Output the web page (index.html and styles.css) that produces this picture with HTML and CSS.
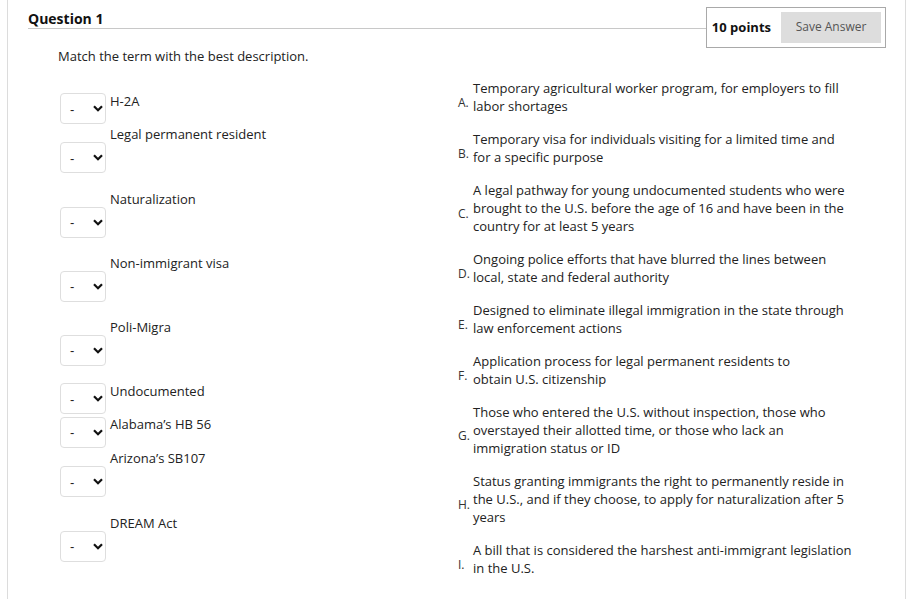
FILE: index.html
```html
<!DOCTYPE html>
<html>
<head>
<meta charset="utf-8">
<link rel="stylesheet" href="styles.css">
</head>
<body>
<div class="page">
  <div class="qhead">
    <div class="qtitle">Question 1</div>
    <div class="pointsbox">
      <span class="points">10 points</span>
      <span class="savebtn">Save Answer</span>
    </div>
  </div>
  <div class="qbody">
    <p class="instr">Match the term with the best description.</p>
    <div class="match">
      <div class="terms">
        <div class="trow h33"><div class="sel"><span class="dash">-</span><svg class="chev" width="10" height="7" viewBox="0 0 10 7"><path d="M1 1.2 L5 5.2 L9 1.2" fill="none" stroke="#111" stroke-width="2.2"/></svg></div><div class="term">H-2A</div></div>
        <div class="trow h65"><div class="sel"><span class="dash">-</span><svg class="chev" width="10" height="7" viewBox="0 0 10 7"><path d="M1 1.2 L5 5.2 L9 1.2" fill="none" stroke="#111" stroke-width="2.2"/></svg></div><div class="term">Legal permanent resident</div></div>
        <div class="trow h64"><div class="sel"><span class="dash">-</span><svg class="chev" width="10" height="7" viewBox="0 0 10 7"><path d="M1 1.2 L5 5.2 L9 1.2" fill="none" stroke="#111" stroke-width="2.2"/></svg></div><div class="term">Naturalization</div></div>
        <div class="trow h64"><div class="sel"><span class="dash">-</span><svg class="chev" width="10" height="7" viewBox="0 0 10 7"><path d="M1 1.2 L5 5.2 L9 1.2" fill="none" stroke="#111" stroke-width="2.2"/></svg></div><div class="term">Non-immigrant visa</div></div>
        <div class="trow h64"><div class="sel"><span class="dash">-</span><svg class="chev" width="10" height="7" viewBox="0 0 10 7"><path d="M1 1.2 L5 5.2 L9 1.2" fill="none" stroke="#111" stroke-width="2.2"/></svg></div><div class="term">Poli-Migra</div></div>
        <div class="trow h33"><div class="sel"><span class="dash">-</span><svg class="chev" width="10" height="7" viewBox="0 0 10 7"><path d="M1 1.2 L5 5.2 L9 1.2" fill="none" stroke="#111" stroke-width="2.2"/></svg></div><div class="term">Undocumented</div></div>
        <div class="trow h34"><div class="sel"><span class="dash">-</span><svg class="chev" width="10" height="7" viewBox="0 0 10 7"><path d="M1 1.2 L5 5.2 L9 1.2" fill="none" stroke="#111" stroke-width="2.2"/></svg></div><div class="term">Alabama’s HB 56</div></div>
        <div class="trow h65"><div class="sel"><span class="dash">-</span><svg class="chev" width="10" height="7" viewBox="0 0 10 7"><path d="M1 1.2 L5 5.2 L9 1.2" fill="none" stroke="#111" stroke-width="2.2"/></svg></div><div class="term">Arizona’s SB107</div></div>
        <div class="trow h64"><div class="sel"><span class="dash">-</span><svg class="chev" width="10" height="7" viewBox="0 0 10 7"><path d="M1 1.2 L5 5.2 L9 1.2" fill="none" stroke="#111" stroke-width="2.2"/></svg></div><div class="term">DREAM Act</div></div>
      </div>
      <div class="descs">
        <div class="drow"><div class="letter">A.</div><div class="desc">Temporary agricultural worker program, for employers to fill labor shortages</div></div>
        <div class="drow"><div class="letter">B.</div><div class="desc">Temporary visa for individuals visiting for a limited time and for a specific purpose</div></div>
        <div class="drow"><div class="letter">C.</div><div class="desc">A legal pathway for young undocumented students who were brought to the U.S. before the age of 16 and have been in the country for at least 5 years</div></div>
        <div class="drow"><div class="letter">D.</div><div class="desc">Ongoing police efforts that have blurred the lines between local, state and federal authority</div></div>
        <div class="drow"><div class="letter">E.</div><div class="desc">Designed to eliminate illegal immigration in the state through law enforcement actions</div></div>
        <div class="drow"><div class="letter">F.</div><div class="desc">Application process for legal permanent residents to<br>obtain U.S. citizenship</div></div>
        <div class="drow"><div class="letter">G.</div><div class="desc">Those who entered the U.S. without inspection, those who overstayed their allotted time, or those who lack an immigration status or ID</div></div>
        <div class="drow"><div class="letter">H.</div><div class="desc">Status granting immigrants the right to permanently reside in the U.S., and if they choose, to apply for naturalization after 5 years</div></div>
        <div class="drow"><div class="letter">I.</div><div class="desc">A bill that is considered the harshest anti-immigrant legislation in the U.S.</div></div>
      </div>
    </div>
  </div>
</div>
</body>
</html>
```
FILE: styles.css
```css
html, body {
  margin: 0;
  padding: 0;
  background: #fff;
}
body {
  font-family: "Open Sans", "Liberation Sans", sans-serif;
  color: #222;
  font-size: 13px;
  line-height: 18px;
}
.page {
  margin-left: 7px;
  width: 897px;
  min-height: 599px;
  border-left: 1px solid #dcdcdc;
  border-right: 1px solid #dcdcdc;
  box-sizing: content-box;
}
.qhead {
  display: flex;
  align-items: flex-start;
  padding-top: 7px;
  margin-left: 20px;
  margin-right: 19px;
}
.qtitle {
  flex: 1;
  padding-top: 2px;
  font-size: 14px;
  line-height: 19px;
  font-weight: 700;
  color: #111;
  border-bottom: 1px solid #c8c8c8;
  padding-left: 0;
}
.pointsbox {
  display: flex;
  align-items: center;
  border: 1px solid #a9a9a9;
  padding: 4px 4px 4px 5px;
  gap: 10px;
}
.points {
  font-weight: 700;
  font-size: 13px;
  color: #111;
  margin-top: -2px;
}
.savebtn {
  display: flex;
  align-items: center;
  justify-content: center;
  width: 100px;
  height: 31px;
  padding-bottom: 2px;
  box-sizing: border-box;
  background: #dddddd;
  color: #555;
  font-size: 12px;
}
.qbody {
  padding-left: 50px;
}
.instr {
  margin: 0;
  padding-top: 0;
  margin-top: -1px;
  color: #222;
}
.match {
  display: flex;
  margin-top: 14px;
  margin-left: 2px;
}
.terms {
  width: 396px;
  padding-top: 13px;
  display: flex;
  flex-direction: column;
}
.trow {
  display: flex;
}
.h33 { height: 33px; }
.h34 { height: 34px; }
.h64 { height: 64px; }
.h65 { height: 65px; }
.sel {
  align-self: center;
  width: 46px;
  height: 31px;
  box-sizing: border-box;
  border: 1px solid #dedede;
  border-radius: 4px;
  display: flex;
  align-items: center;
  padding-left: 9px;
  padding-top: 2px;
  background: #fff;
}
.dash {
  font-family: "Liberation Sans", sans-serif;
  font-size: 13px;
  color: #222;
  width: 23px;
}
.chev {
  display: block;
  margin-top: -2px;
}
.term {
  margin-left: 4px;
  color: #222;
}
.descs {
  display: flex;
  flex-direction: column;
  gap: 15px;
}
.drow {
  display: flex;
}
.letter {
  width: 17px;
  align-self: center;
  padding-top: 12px;
  padding-left: 2px;
  box-sizing: border-box;
  font-size: 12px;
  line-height: 14px;
  color: #333;
}
.desc {
  width: 381px;
  color: #222;
}
```
